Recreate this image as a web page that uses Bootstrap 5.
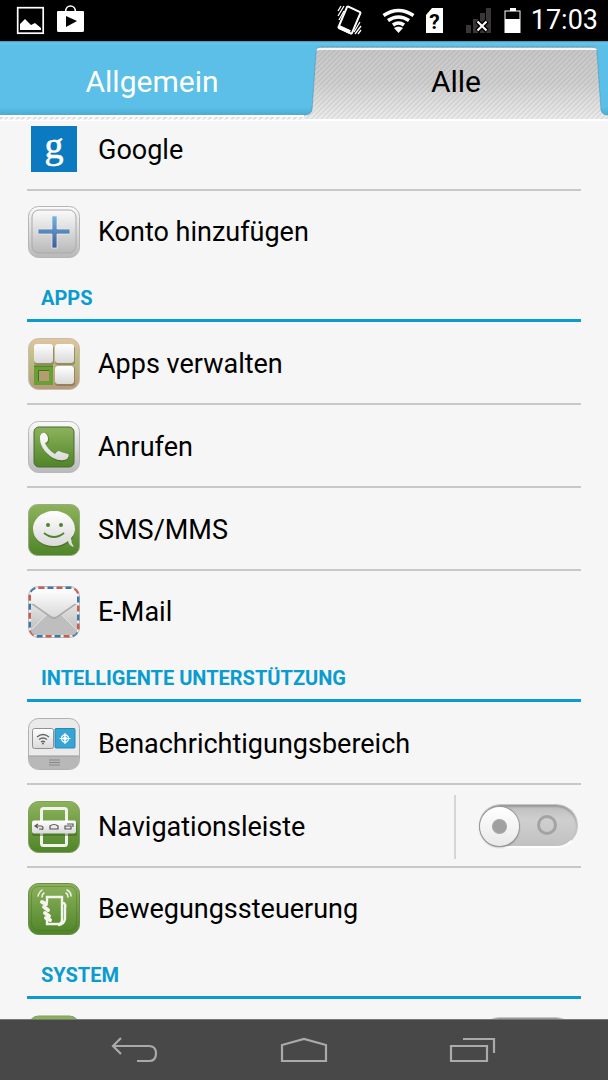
<!DOCTYPE html>
<html lang="de">
<head>
<meta charset="utf-8">
<meta name="viewport" content="width=device-width, initial-scale=1">
<title>Einstellungen</title>
<link href="https://cdn.jsdelivr.net/npm/bootstrap@5.3.0/dist/css/bootstrap.min.css" rel="stylesheet">
<style>
body{font-family:Roboto,"Noto Sans",sans-serif;background:#f6f6f6;color:#000}
svg{display:block;flex:none}
.statusbar{height:41px;padding:0 10px 0 8px;background:#000;color:#fff;font-size:27px;line-height:41px}
.tabs{height:80px;background:linear-gradient(#3e95b8 0,#69c8ed 2px,#5bbfe7 4px,#5bbfe7 66px,#4cabd2 74px,#fff 74px,#fff 76px,transparent 76px,transparent 78px,#fff 79px),repeating-linear-gradient(135deg,#f6f6f6 0 2px,#dedede 2px 4px)}
.tab-btn{font-size:30px;line-height:40px;color:#fff;background:none;border:0;padding:2px 0 0}
.tab-btn.active{color:#000}
.tab-shape{position:absolute;inset:0;width:100%;height:100%}
.scroll-area{min-height:0}
.settings{margin-top:-13px;padding:0 27px}
.setting{height:83px;padding:2px 0 0 1px;border-bottom:2px solid #c8c8c8;color:#000}
.setting.last-item{height:82px;border-bottom-color:transparent}
.setting-link{gap:18px;color:#000;text-decoration:none;font-size:27px;line-height:32px}
.icon-box{width:52px;height:52px}
.section-title{height:49px;margin:0;padding:9px 14px 0;border-bottom:3px solid #0a9bd0;color:#0a9bd0;font-size:20px;font-weight:700;line-height:32px}
.switch-cell{border-left:2px solid #d6d6d6;height:64px;padding:0 3px 2px 23px}
.switch{appearance:none;position:relative;width:99px;height:43px;margin:0;border-radius:22px;border:1px solid #c4c4c4;border-bottom-color:#fff;background:linear-gradient(#bdbdbd,#cfcfcf 35%,#c2c2c2);box-shadow:inset 0 2px 2px #999,0 1px 1px #fff}
.switch::before{content:"";position:absolute;left:0;top:2px;width:39px;height:39px;border-radius:50%;background:radial-gradient(circle,#a0a0a0 0 6px,#aaa 7px,transparent 8px),linear-gradient(#fff,#e9e9e9);box-shadow:0 0 0 1px #999,0 1px 2px 0 #555}
.switch::after{content:"";position:absolute;right:20px;top:10px;width:20px;height:20px;border-radius:50%;border:3px solid #a3a3a3}
.navbar-soft{height:61px;background:#484849;border-top:1px solid #777;padding:0 50px}
.navbar-soft button{background:none;border:0;padding:0}
</style>
</head>
<body>
<svg width="0" height="0" class="position-absolute" aria-hidden="true"><defs>
<linearGradient id="silver" x2="0" y2="1"><stop stop-color="#fafafa"/><stop offset="1" stop-color="#b9b9b9"/></linearGradient>
<linearGradient id="pale" x2="0" y2="1"><stop stop-color="#fff"/><stop offset="1" stop-color="#d9d9d9"/></linearGradient>
<linearGradient id="green" x2="0" y2="1"><stop stop-color="#8db35c"/><stop offset="1" stop-color="#4f8428"/></linearGradient>
<linearGradient id="plus" x2="0" y2="1"><stop stop-color="#74b4dc"/><stop offset="1" stop-color="#3f5a96"/></linearGradient>
<linearGradient id="wood" x2="0" y2="1"><stop stop-color="#e3c4a0"/><stop offset=".4" stop-color="#b9bf83"/><stop offset="1" stop-color="#b89a78"/></linearGradient>
<linearGradient id="tabfill" x2="0" y2="1"><stop stop-color="#c9c9c9"/><stop offset=".5" stop-color="#d2d2d2"/><stop offset="1" stop-color="#efefef"/></linearGradient>
<pattern id="hatch" width="5" height="5" patternUnits="userSpaceOnUse"><path d="M-1 6L6-1M-1 1L1-1M4 6L6 4" stroke="#000" stroke-opacity=".07" stroke-width="1.6"/></pattern>
<clipPath id="round"><rect width="52" height="52" rx="10"/></clipPath>
</defs></svg>

<div class="d-flex flex-column vh-100 overflow-hidden">
<header class="statusbar d-flex align-items-center flex-shrink-0">
 <svg width="80" height="41" viewBox="8 0 80 41" fill="#fff"><rect x="17.700" y="7.700" width="25.500" height="25.500" fill="none" stroke="#fff" stroke-width="1.700"/><path d="M20 30V24l5-5 6 6 4-2 6 5v2zM58 11h25q1 0 1 1v19q0 1-2 1H59q-2 0-2-1V12q0-1 1-1zM66 16v11l11-6z" fill-rule="evenodd"/><path d="M65.500 12c0-8 10-8 10 0" fill="none" stroke="#fff" stroke-width="1.700"/></svg>
 <svg class="ms-auto" width="192" height="41" viewBox="336 0 192 41" fill="#fff">
  <g fill="none" stroke="#fff" stroke-width="2"><path d="M348 7q1-1 2 0l11 5q1 1 0 2l-8 19q-1 1-2 0l-11-5q-1-1 0-2z"/><path d="M340 27l11 5" stroke-width="4"/><path d="M339 11l3-5M339 16l6-10M340 20l5-9M355 32l6-10M356 34l6-8M359 34l3-4" stroke-width="1.300"/></g>
  <g fill="none" stroke="#fff" stroke-width="3.600"><path d="M384.500 15.500q15-10 30 0"/><path d="M389 20.500q10.500-7 21 0"/><path d="M394 25q5.500-4 11 0"/></g><path d="M395 28q4.500-3 9 0l-4.500 5z"/>
  <path d="M433 8h11v25h-17V15z"/><text x="435.500" y="29" fill="#000" font-size="21" font-weight="700" text-anchor="middle">?</text>
  <path d="M467 25h5v8h-5zM474 19h5v14h-5zM481 13h5v20h-5zM487 8h5v25h-5z" fill="#3b3636"/><path d="M478 21l10 10M488 21l-10 10" stroke="#000" stroke-width="5"/><path d="M478.500 21.500l9 9M487.500 21.500l-9 9" stroke="#fff" stroke-width="2"/>
  <path d="M511 8h6v2.500h4.500V33h-16V10.500H511z"/><path d="M506.500 11.500h14V19h-14z" fill="#000"/>
 </svg>
 <time class="ps-1">17:03</time>
</header>

<div class="tabs d-flex flex-shrink-0" role="tablist">
 <button class="tab-btn col-6" role="tab">Allgemein</button>
 <button class="tab-btn active col-6 position-relative" role="tab" aria-selected="true">
  <svg class="tab-shape" viewBox="0 0 304 80" preserveAspectRatio="none"><path d="M0 80V74q7 0 8-5L12 11q0-5 5-5H289q4 0 4 5l4 58q1 5 7 5v6z" fill="url(#tabfill)"/><path d="M0 80V74q7 0 8-5L12 11q0-5 5-5H289q4 0 4 5l4 58q1 5 7 5v6z" fill="url(#hatch)"/><path d="M0 74q7 0 8-5L12 11q0-5 5-5H289q4 0 4 5l4 58q1 5 7 5" fill="none" stroke="#368fb5" stroke-opacity=".5" stroke-width="1"/><path d="M13 9q1-1 4-1H289q3 0 3 1" fill="none" stroke="#fff" stroke-opacity=".85" stroke-width="2"/><path d="M0 79H304" stroke="#fff" stroke-width="2"/></svg>
  <span class="position-relative">Alle</span>
 </button>
</div>

<main class="scroll-area flex-grow-1 overflow-hidden">
<div class="settings">
 <div class="setting d-flex"><a href="#" class="setting-link d-flex align-items-center flex-grow-1">
  <svg class="icon-box" viewBox="0 0 52 52"><rect x="3" y="2" width="46" height="46" fill="#0c7ac0"/><text x="26" y="34" font-family="Liberation Serif,serif" font-size="38" fill="#fff" stroke="#fff" stroke-width=".6" text-anchor="middle">g</text></svg>Google</a></div>
 <div class="setting last-item d-flex"><a href="#" class="setting-link d-flex align-items-center flex-grow-1">
  <svg class="icon-box" viewBox="0 0 52 52"><rect x=".5" y=".5" width="51" height="51" rx="10" fill="url(#silver)" stroke="#b5b5b5"/><rect x="4" y="4" width="44" height="43" rx="7" fill="url(#silver)" stroke="#aaa"/><path d="M24 10h5v13h13v5H29v14h-5V28H10v-5h14z" fill="url(#plus)" stroke="#e9f0f6" stroke-width=".7"/></svg>Konto hinzufügen</a></div>
 <h2 class="section-title">APPS</h2>
 <div class="setting d-flex"><a href="#" class="setting-link d-flex align-items-center flex-grow-1">
  <svg class="icon-box" viewBox="0 0 52 52"><rect x=".5" y=".5" width="51" height="51" rx="10" fill="url(#wood)" stroke="#c5bdb2"/><g fill="#806b50" opacity=".6"><rect x="6" y="8" width="20" height="19" rx="3"/><rect x="27" y="8" width="20" height="19" rx="3"/><rect x="27" y="28" width="20" height="20" rx="3"/></g><g fill="url(#pale)"><rect x="6" y="6" width="19" height="19" rx="3"/><rect x="27" y="6" width="19" height="19" rx="3"/><rect x="27" y="28" width="19" height="18" rx="3"/></g><rect x="8" y="30" width="15" height="15" fill="#b69a72" stroke="#67a135" stroke-width="4"/><path d="M6 28h19M10.500 43V32.500h10.500" fill="none" stroke="#3f7317"/></svg>Apps verwalten</a></div>
 <div class="setting d-flex"><a href="#" class="setting-link d-flex align-items-center flex-grow-1">
  <svg class="icon-box" viewBox="0 0 52 52"><rect x=".5" y=".5" width="51" height="51" rx="10" fill="url(#silver)" stroke="#b8b8b8"/><rect x="6" y="6" width="40" height="40" rx="5" fill="url(#green)" stroke="#496b31"/><path d="M13 16q2-5 5-4 3 2 3 7 0 3-3 4 3 7 9 10 3-5 6-2l8 3q1 2-2 5-6 4-14-1Q11 28 13 16z" fill="#294a10" opacity=".4"/><path d="M12 15q2-4 5-3 3 2 3 6 0 3-3 4 3 7 10 11 3-5 6-2l7 2q2 1-1 5-6 3-14-1Q11 28 12 15z" fill="url(#pale)"/></svg>Anrufen</a></div>
 <div class="setting d-flex"><a href="#" class="setting-link d-flex align-items-center flex-grow-1">
  <svg class="icon-box" viewBox="0 0 52 52"><rect x=".5" y=".5" width="51" height="51" rx="9" fill="url(#green)" stroke="#9aab84"/><ellipse cx="26" cy="26" rx="21" ry="17.500" fill="#2d5513" opacity=".4"/><path d="M40 37Q34 42 26 42C14 42 5 35 5 25S14 7 26 7s21 8 21 18q0 5-4 9 0 5 3 9-5-1-6-6z" fill="url(#pale)"/><circle cx="20" cy="21" r="2" fill="#4f842b"/><circle cx="33" cy="21" r="2" fill="#4f842b"/><path d="M16 29q10 8 20 0" fill="none" stroke="#4f842b" stroke-width="2"/></svg>SMS/MMS</a></div>
 <div class="setting last-item d-flex"><a href="#" class="setting-link d-flex align-items-center flex-grow-1">
  <svg class="icon-box" viewBox="0 0 52 52"><g clip-path="url(#round)"><rect width="52" height="52" fill="#eee"/><rect x="1.500" y="1.500" width="49" height="49" rx="9" fill="none" stroke="#cc5b51" stroke-width="3" stroke-dasharray="6 12"/><rect x="1.500" y="1.500" width="49" height="49" rx="9" fill="none" stroke="#3c78ac" stroke-width="3" stroke-dasharray="6 12" stroke-dashoffset="-9"/><rect x="3" y="3" width="46" height="46" rx="7" fill="url(#silver)"/><path d="M3 45L19 29l7 4 7-4 16 16q-1 4-5 4H8q-4 0-5-4z" fill="#bebebe"/><path d="M4 43L20 27M48 43L32 27" stroke="#e2e2e2"/><path d="M3 18l20 14q3 2 6 0l20-14" fill="#aaa"/><path d="M3 16V10q0-7 7-7h32q7 0 7 7v6L29 30q-3 2-6 0z" fill="url(#pale)"/></g><rect x=".5" y=".5" width="51" height="51" rx="10" fill="none" stroke="#aaa" stroke-opacity=".7"/></svg>E-Mail</a></div>
 <h2 class="section-title">INTELLIGENTE UNTERSTÜTZUNG</h2>
 <div class="setting d-flex"><a href="#" class="setting-link d-flex align-items-center flex-grow-1">
  <svg class="icon-box" viewBox="0 0 52 52"><rect x=".5" y=".5" width="51" height="51" rx="10" fill="#eaeaea" stroke="#b0b0b0"/><path d="M1 38h50v4q0 9-9 9H10q-9 0-9-9z" fill="#b8b8b8"/><path d="M1 38h50" stroke="#999"/><rect x="4.500" y="10.500" width="21" height="20" rx="2" fill="url(#pale)" stroke="#909090"/><rect x="27" y="10.500" width="20" height="19.500" rx="1" fill="#36a5d4" stroke="#2988b2"/><g fill="none" stroke="#666" stroke-width="1.300"><path d="M9 19q6-5 12 0M11 21.500q4-3 8 0M13 24q2-1.500 4 0"/><path d="M21 42h11M21 44.500h11M21 47h11" stroke="#888" stroke-width="1"/></g><circle cx="15" cy="25.500" r="1" fill="#666"/><circle cx="37" cy="20.500" r="3.500" fill="none" stroke="#fff" stroke-width="1.300"/><path d="M37 15v11M31.500 20.500h11" stroke="#fff" stroke-width="1.200"/><circle cx="37" cy="20.500" r="2" fill="#fff"/></svg>Benachrichtigungsbereich</a></div>
 <div class="setting d-flex align-items-center"><a href="#" class="setting-link d-flex align-items-center flex-grow-1">
  <svg class="icon-box" viewBox="0 0 52 52"><rect x=".5" y=".5" width="51" height="51" rx="10" fill="url(#green)" stroke="#7f9f5d"/><rect x="13.500" y="7.500" width="25" height="37" rx="2" fill="none" stroke="#f1f1ee" stroke-width="3"/><rect x="4" y="21" width="45" height="14" rx="2" fill="#2e5514" opacity=".4"/><rect x="4" y="19.500" width="44" height="13" rx="2" fill="url(#pale)"/><g fill="none" stroke="#555" stroke-width="1.200"><path d="M10 23l-3 2 3 2M7 25h6q2 0 2 2t-2 1h-2M22 28v-3q4-3 8 0v3zM37 25h6v3h-6zM39 23h6v3"/></g></svg>Navigationsleiste</a>
  <div class="switch-cell d-flex align-items-center"><input class="switch" type="checkbox" role="switch" aria-label="Navigationsleiste"></div></div>
 <div class="setting last-item d-flex"><a href="#" class="setting-link d-flex align-items-center flex-grow-1">
  <svg class="icon-box" viewBox="0 0 52 52"><rect x=".5" y=".5" width="51" height="51" rx="10" fill="url(#green)" stroke="#6d8c4c"/><rect x="3.500" y="3.500" width="45" height="44" rx="7" fill="none" stroke="#466f24" stroke-opacity=".4"/><g fill="none" stroke="#f3f3ef" stroke-linecap="round"><path d="M19 19V14h15v22q0 5-3 5H19v-4M36 20q2 2 1 5v11q-1 5-6 6" stroke-width="2.400"/><path d="M14 19l4 2M16 24l4 3M17 30l4 3M18 35l4 2" stroke-width="4"/><path d="M10 13q1-4 4-6M14 14q0-3 2-4M38 10q2 1 2 4M39 7q4 2 4 6" stroke-width="1.500"/></g></svg>Bewegungssteuerung</a></div>
 <h2 class="section-title">SYSTEM</h2>
 <div class="setting d-flex align-items-center"><a href="#" class="setting-link d-flex align-items-center flex-grow-1" aria-label="System">
  <svg class="icon-box" viewBox="0 0 52 52"><rect x=".5" y="1" width="51" height="50" rx="10" fill="url(#green)" stroke="#7f9f5d"/></svg></a>
  <div class="d-flex align-items-center pe-1 pb-1"><input class="switch" type="checkbox" role="switch" aria-label="System"></div></div>
</div>
</main>

<nav class="navbar-soft d-flex flex-shrink-0">
 <button class="flex-fill d-flex align-items-center justify-content-center" aria-label="Zurück"><svg width="48" height="28" fill="none" stroke="#aaa" stroke-width="2.200"><path d="M10 2L2 10l8 8M2 10h36q7 0 7 7.500T38 25H26"/></svg></button>
 <button class="flex-fill d-flex align-items-center justify-content-center" aria-label="Startseite"><svg width="48" height="28" fill="none" stroke="#aaa" stroke-width="2.200"><path d="M2 25V9l22-6 22 6v16z"/></svg></button>
 <button class="flex-fill d-flex align-items-center justify-content-center" aria-label="Letzte Apps"><svg width="48" height="28" fill="none" stroke="#aaa" stroke-width="2.200"><path d="M2 10h36v15H2zM14 3h31v14"/></svg></button>
</nav>
</div>
<script src="https://cdn.jsdelivr.net/npm/bootstrap@5.3.0/dist/js/bootstrap.bundle.min.js"></script>
</body>
</html>
